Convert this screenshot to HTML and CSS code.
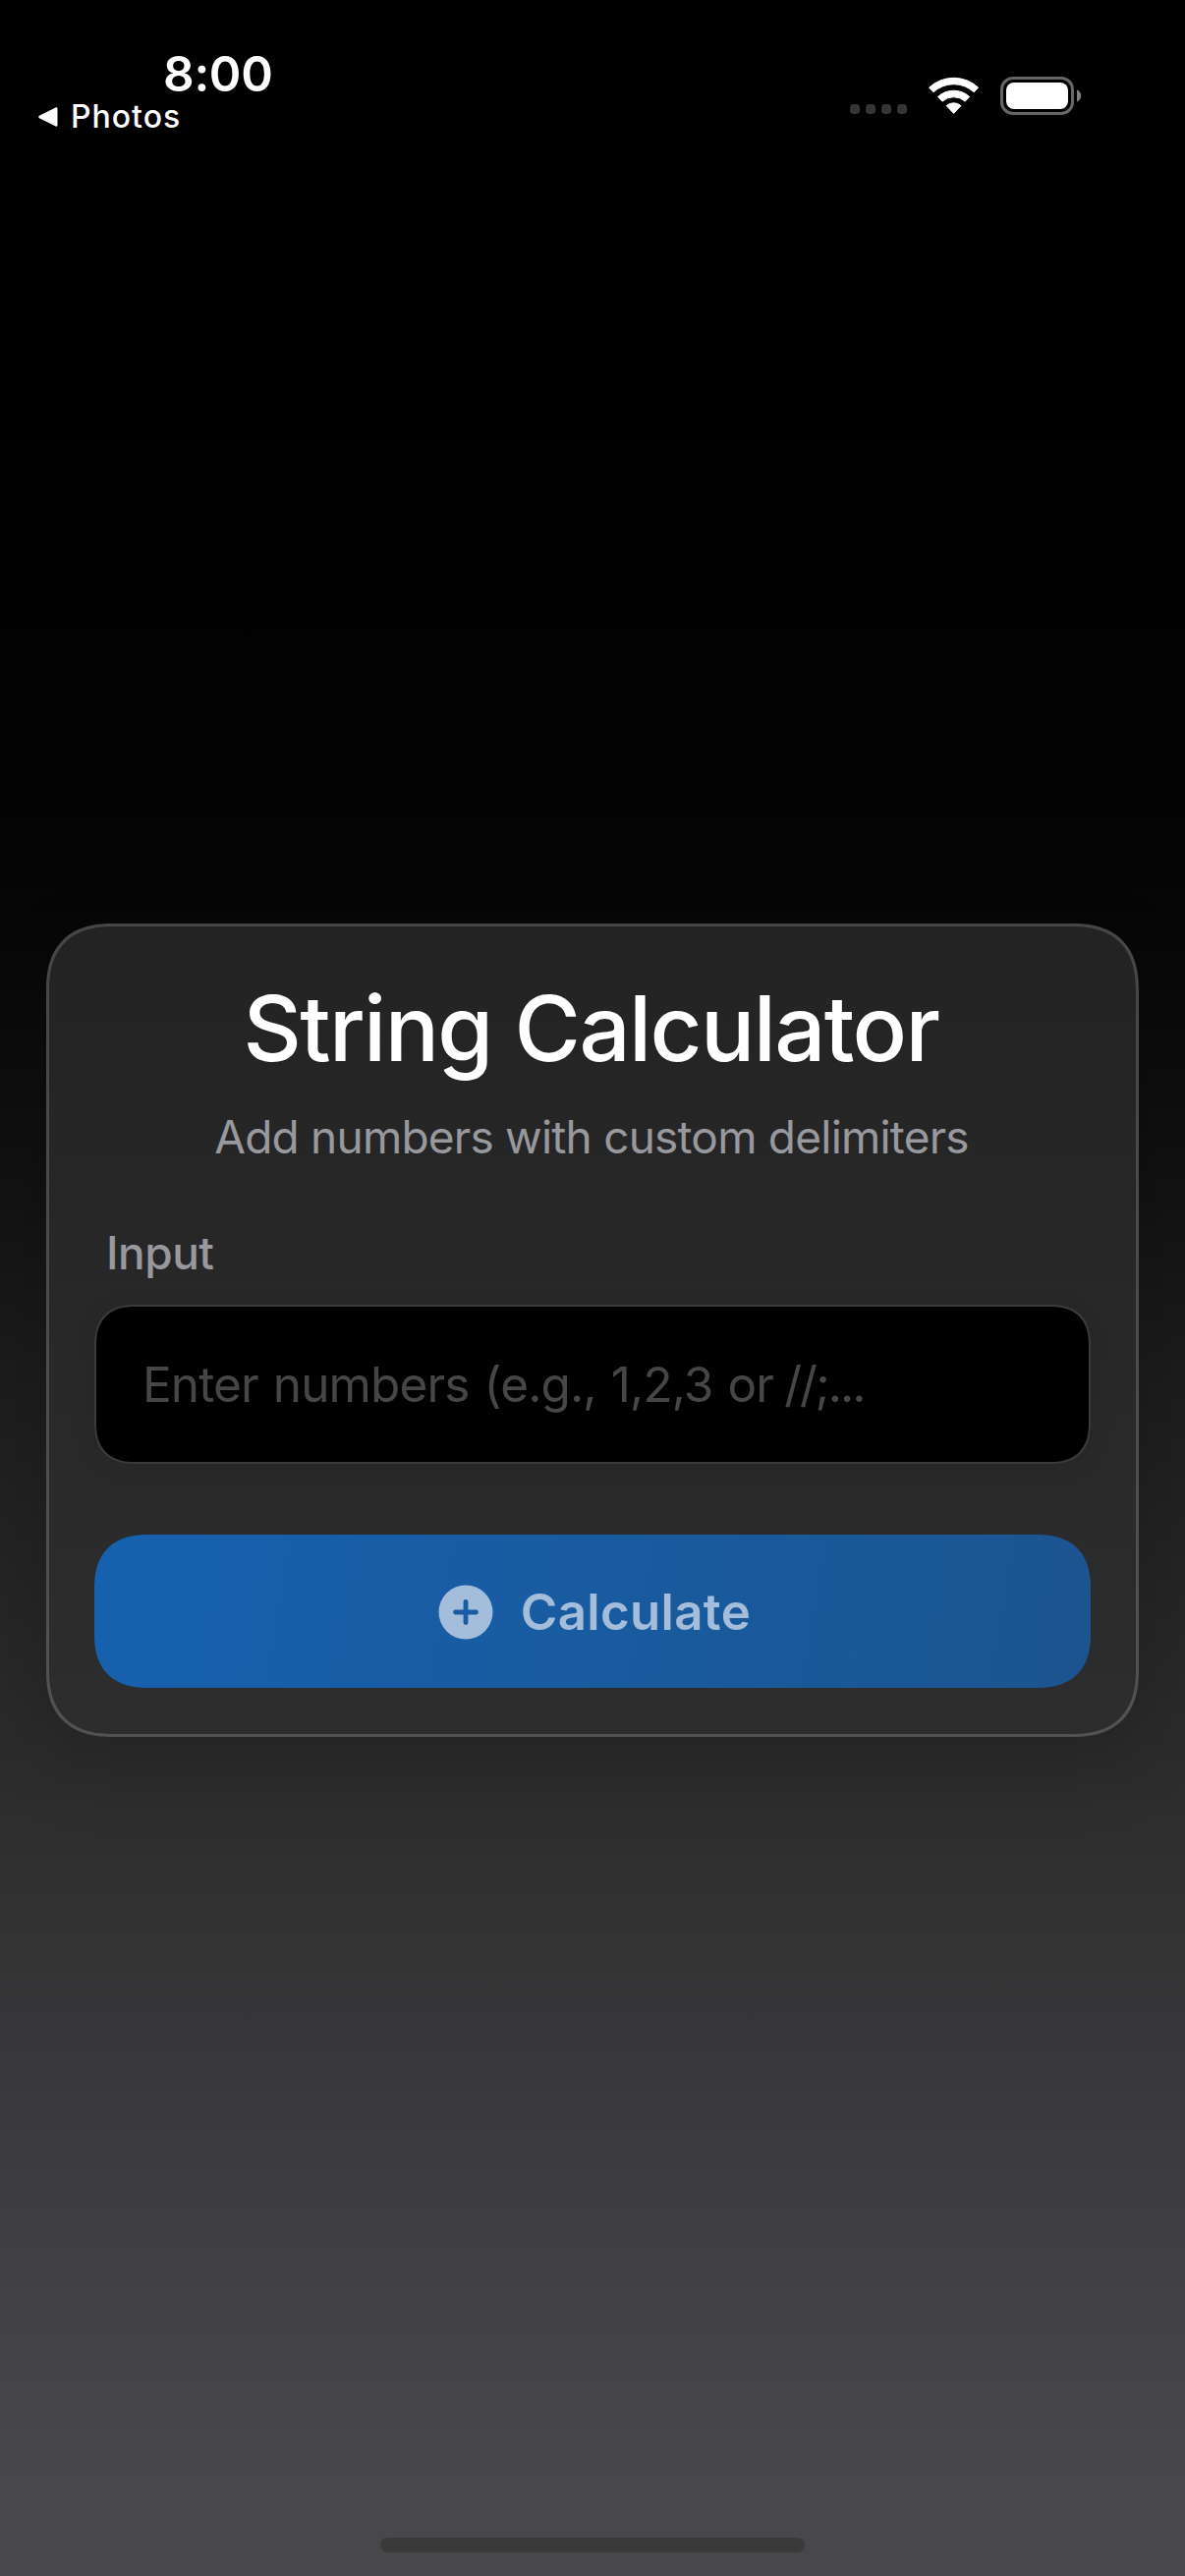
FILE: index.html
```html
<!DOCTYPE html>
<html lang="en">
<head>
<meta charset="utf-8">
<title>String Calculator</title>
<link rel="stylesheet" href="styles.css">
</head>
<body>
<div class="screen">
  <header class="status-bar">
    <div class="status-left">
      <div class="time">8:00</div>
      <div class="back">
        <svg class="back-arrow" viewBox="0 0 22 22"><path d="M2.5 9.6 18.6 1.5Q20.5.8 20.5 2.8V19.2Q20.5 21.2 18.6 20.5L2.5 12.4Q-.2 11 2.5 9.6Z" fill="#fff"/></svg>
        <span>Photos</span>
      </div>
    </div>
    <div class="status-right">
      <div class="signal"><i></i><i></i><i></i><i></i></div>
      <svg class="wifi" viewBox="0 0 52 39" fill="#fff" stroke="#fff" stroke-width="1" stroke-linejoin="round">
        <path d="M.6 11.1A36.8 36.8 0 0 1 50.6 11.1L46.2 15.8A30.3 30.3 0 0 0 5 15.8Z"/>
        <path d="M9.5 20.5A23.8 23.8 0 0 1 41.7 20.5L37.2 25.2A17.3 17.3 0 0 0 14 25.2Z"/>
        <path d="M18.2 29.6A11.2 11.2 0 0 1 33 29.6L25.6 37.4Z"/>
      </svg>
      <svg class="battery" viewBox="0 0 83 39">
        <rect x="1.5" y="1.5" width="72" height="36" rx="11.5" fill="none" stroke="#666" stroke-width="3"/>
        <rect x="6" y="6" width="63" height="27" rx="8" fill="#fff"/>
        <path d="M78 13.2Q82.2 15.500 82.2 19.500T78 25.800Z" fill="#808080"/>
      </svg>
    </div>
  </header>

  <main class="card">
    <h1 class="title">String Calculator</h1>
    <p class="subtitle">Add numbers with custom delimiters</p>
    <div class="label">Input</div>
    <div class="field"><span>Enter numbers (e.g., 1,2,3 or <span class="tight">//;...</span></span></div>
    <div class="button">
      <svg class="plus" viewBox="0 0 56 56">
        <circle cx="28" cy="28" r="27.500" fill="#a3bddb"/>
        <path d="M28 17.500V38.500M17.500 28H38.500" stroke="#185ca3" stroke-width="4.800" stroke-linecap="round"/>
      </svg>
      <span>Calculate</span>
    </div>
  </main>

  <div class="home-indicator"></div>
</div>
</body>
</html>
```
FILE: styles.css
```css
* { box-sizing: border-box; }

body {
  margin: 0;
  background: #000;
  font-family: Inter, "Liberation Sans", sans-serif;
}

.screen {
  width: 1206px;
  height: 2622px;
  display: flex;
  flex-direction: column;
  overflow: hidden;
  background: linear-gradient(180deg,
    #000 400px, #040404 870px, #101010 1170px, #1c1c1d 1400px,
    #262627 1640px, #2e2e2f 1850px, #363638 2050px, #404042 2290px, #48484a 2520px);
}

.status-bar {
  height: 940px;
  flex: none;
  display: flex;
  justify-content: space-between;
  align-items: flex-start;
  padding: 45px 105px 0 38px;
  color: #fff;
}

.time {
  padding-left: 128px;
  font-size: 49.5px;
  font-weight: 600;
  line-height: 60px;
  letter-spacing: -0.3px;
}

.back {
  display: flex;
  align-items: center;
  gap: 12px;
  margin-top: -5px;
  font-size: 32px;
  font-weight: 500;
  line-height: 38px;
  letter-spacing: 1px;
}

.back-arrow { width: 22px; height: 22px; }

.status-right {
  display: flex;
  align-items: flex-end;
  padding-top: 33px;
}

.signal {
  display: flex;
  gap: 6px;
  margin: 0 22px 1px 0;
}

.signal i {
  width: 10px;
  height: 10px;
  border-radius: 4px;
  background: #343434;
}

.wifi {
  width: 52px;
  height: 39px;
  margin-right: 21px;
  overflow: visible;
}

.battery { width: 83px; height: 39px; }

.card {
  width: 1112px;
  height: 828px;
  flex: none;
  display: flex;
  flex-direction: column;
  align-self: center;
  padding: 43px 46px 0;
  border: 3px solid transparent;
  border-radius: 60px;
  background: linear-gradient(180deg, #232323, #2d2d2d) padding-box,
    linear-gradient(180deg, #464646, #525252) border-box;
  box-shadow: 0 30px 80px rgba(0, 0, 0, 0.17);
}

.title {
  margin: 0;
  padding-right: 3px;
  color: #fff;
  font-size: 92px;
  font-weight: 500;
  line-height: 122px;
  letter-spacing: -1.65px;
  text-align: center;
}

.subtitle {
  margin: 19px 0 0;
  padding-right: 2px;
  color: #98989f;
  font-size: 46px;
  line-height: 60px;
  letter-spacing: -0.78px;
  text-align: center;
}

.label {
  margin: 58px 0 23px;
  padding-left: 12px;
  color: #98989f;
  font-size: 46px;
  font-weight: 500;
  line-height: 60px;
  letter-spacing: -0.5px;
}

.field {
  height: 162px;
  display: flex;
  align-items: center;
  padding: 0 47px;
  border: 2px solid #3a3a3b;
  border-radius: 36px;
  background: #000;
  box-shadow: 0 6px 24px rgba(0, 0, 0, 0.08);
  color: #464648;
  font-size: 49.5px;
  letter-spacing: -0.88px;
  word-spacing: 2px;
  white-space: nowrap;
}

.tight {
  margin-left: -4px;
  letter-spacing: -2px;
}

.button {
  height: 156px;
  display: flex;
  align-items: center;
  justify-content: center;
  gap: 28px;
  margin: 72px 0 0;
  padding: 1px 0 0 4px;
  border-radius: 48px;
  background: linear-gradient(100deg, #1661af, #1b5590);
  color: #a3bddb;
  font-size: 51px;
  font-weight: 600;
  letter-spacing: 0.33px;
}

.plus { width: 56px; height: 56px; }

.home-indicator {
  width: 432px;
  height: 15px;
  margin: auto auto 24px;
  border-radius: 8px;
  background: #3a3a3a;
}

/* Continuous corners: the curve starts earlier than a circular arc's */
@supports (corner-shape: superellipse(1.3)) {
  .card { border-radius: 69px; corner-shape: superellipse(1.3); }
  .field { border-radius: 42px; corner-shape: superellipse(1.3); }
  .button { border-radius: 56px; corner-shape: superellipse(1.3); }
}
```
